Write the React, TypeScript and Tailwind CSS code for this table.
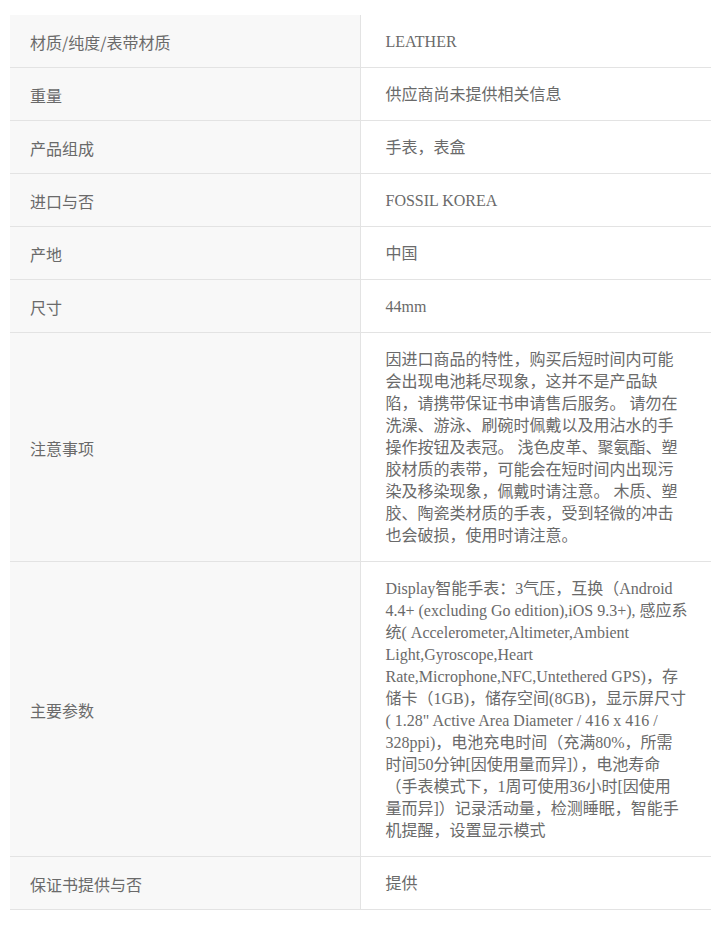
import React from "react";

type Row = {
  label: string;
  lines: string[];
};

const rows: Row[] = [
  { label: "材质/纯度/表带材质", lines: ["LEATHER"] },
  { label: "重量", lines: ["供应商尚未提供相关信息"] },
  { label: "产品组成", lines: ["手表，表盒"] },
  { label: "进口与否", lines: ["FOSSIL KOREA"] },
  { label: "产地", lines: ["中国"] },
  { label: "尺寸", lines: ["44mm"] },
  {
    label: "注意事项",
    lines: [
      "因进口商品的特性，购买后短时间内可能",
      "会出现电池耗尽现象，这并不是产品缺",
      "陷，请携带保证书申请售后服务。 请勿在",
      "洗澡、游泳、刷碗时佩戴以及用沾水的手",
      "操作按钮及表冠。 浅色皮革、聚氨酯、塑",
      "胶材质的表带，可能会在短时间内出现污",
      "染及移染现象，佩戴时请注意。 木质、塑",
      "胶、陶瓷类材质的手表，受到轻微的冲击",
      "也会破损，使用时请注意。",
    ],
  },
  {
    label: "主要参数",
    lines: [
      "Display智能手表：3气压，互换（Android",
      "4.4+ (excluding Go edition),iOS 9.3+), 感应系",
      "统( Accelerometer,Altimeter,Ambient",
      "Light,Gyroscope,Heart",
      "Rate,Microphone,NFC,Untethered GPS)，存",
      "储卡（1GB)，储存空间(8GB)，显示屏尺寸",
      "( 1.28\" Active Area Diameter / 416 x 416 /",
      "328ppi)，电池充电时间（充满80%，所需",
      "时间50分钟[因使用量而异]），电池寿命",
      "（手表模式下，1周可使用36小时[因使用",
      "量而异]）记录活动量，检测睡眠，智能手",
      "机提醒，设置显示模式",
    ],
  },
  { label: "保证书提供与否", lines: ["提供"] },
];

export default function App() {
  return (
    <div className="min-h-[944px] bg-white pt-[15px] px-[10px] font-['Liberation_Serif','Noto_Sans_CJK_SC',serif] text-[16px] leading-[22px] text-[#6a6a6a]">
      <div className="w-[701px]">
        {rows.map((row) => (
          <div key={row.label} className="grid grid-cols-2 border-b border-[#e3e3e3]">
            {/* LABEL */}
            <div className="flex items-center bg-[#f8f8f8] border-r border-[#e3e3e3] px-[20px] pt-[16px] pb-[14px] font-['Noto_Sans_CJK_SC',sans-serif]">
              {row.label}
            </div>

            {/* VALUE */}
            <div className="px-[25px] pt-[16px] pb-[14px]">
              {row.lines.map((line, i) => (
                <div key={i} className="whitespace-nowrap">
                  {line}
                </div>
              ))}
            </div>
          </div>
        ))}
      </div>
    </div>
  );
}
